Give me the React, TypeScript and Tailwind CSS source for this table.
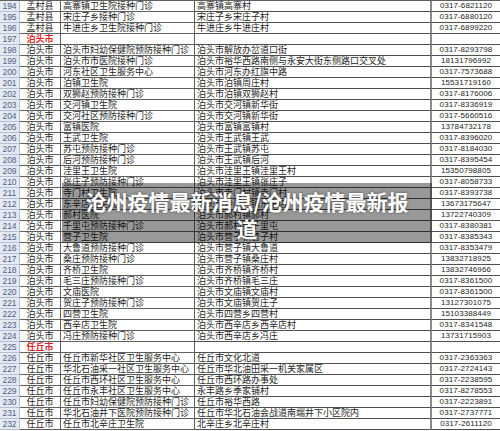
const rows: [number, string, string, string, string, boolean?][] = [
  [194, '孟村县', '高寨镇卫生院接种门诊', '高寨镇高寨村', '0317-6821120'],
  [195, '孟村县', '宋庄子乡接种门诊', '宋庄子乡宋庄子村', '0317-6880120'],
  [196, '孟村县', '牛进庄乡卫生院接种门诊', '牛进庄乡牛进庄村', '0317-6899220'],
  [197, '泊头市', '', '', '', true],
  [198, '泊头市', '泊头市妇幼保健院预防接种门诊', '泊头市解放办岔道口街', '0317-8293798'],
  [199, '泊头市', '泊头市市医院接种门诊', '泊头市裕华西路南侧与永安大街东侧路口交叉处', '18131796992'],
  [200, '泊头市', '河东社区卫生服务中心', '泊头市河东办红旗中路', '0317-7573688'],
  [201, '泊头市', '泊镇卫生院', '泊头市泊镇周庄村', '15531719160'],
  [202, '泊头市', '双狮赵预防接种门诊', '泊头市泊镇双狮赵村', '0317-8176006'],
  [203, '泊头市', '交河镇卫生院', '泊头市交河镇新华街', '0317-8336919'],
  [204, '泊头市', '交河社区预防接种门诊', '泊头市交河镇新华街', '0317-5660516'],
  [205, '泊头市', '富镇医院', '泊头市富镇富镇村', '13784732178'],
  [206, '泊头市', '王武卫生院', '泊头市王武镇王武', '0317-8396020'],
  [207, '泊头市', '苏屯预防接种门诊', '泊头市王武镇苏屯', '0317-8184030'],
  [208, '泊头市', '后河预防接种门诊', '泊头市王武镇后河', '0317-8395454'],
  [209, '泊头市', '洼里王卫生院', '泊头市洼里王镇洼里王村', '15350798805'],
  [210, '泊头市', '张庄子预防接种门诊', '泊头市洼里王镇张庄子', '0317-8058733'],
  [211, '泊头市', '寺门村卫生院', '泊头市寺门村镇寺门村', '0317-8393738'],
  [212, '泊头市', '东辛店卫生院', '泊头市寺门村镇东辛店', '13673175647'],
  [213, '泊头市', '郝村医院', '泊头市郝村镇郝村', '13722740309'],
  [214, '泊头市', '千里屯预防接种门诊', '泊头市郝村镇千里屯', '0317-8380381'],
  [215, '泊头市', '营子卫生院', '泊头市营子镇营子村', '0317-8385343'],
  [216, '泊头市', '大鲁道预防接种门诊', '泊头市营子镇大鲁道', '0317-8353479'],
  [217, '泊头市', '桑庄预防接种门诊', '泊头市营子镇桑庄村', '13832718925'],
  [218, '泊头市', '齐桥卫生院', '泊头市齐桥镇齐桥村', '13832746966'],
  [219, '泊头市', '毛三庄预防接种门诊', '泊头市齐桥镇毛三庄', '0317-8361500'],
  [220, '泊头市', '文庙医院', '泊头市文庙镇文庙村', '0317-8361500'],
  [221, '泊头市', '贺庄子预防接种门诊', '泊头市文庙镇贺庄子', '13127301075'],
  [222, '泊头市', '四营卫生院', '泊头市四营乡四营村', '15103388449'],
  [223, '泊头市', '西辛店卫生院', '泊头市西辛店乡西辛店村', '0317-8341548'],
  [224, '泊头市', '冯庄预防接种门诊', '泊头市西辛店乡冯庄', '13731715903'],
  [225, '任丘市', '', '', '', true],
  [226, '任丘市', '任丘市新华社区卫生服务中心', '任丘市文化北道', '0317-2363363'],
  [227, '任丘市', '华北石油采一社区卫生服务中心', '任丘市华北油田采一机关家属区', '0317-2724143'],
  [228, '任丘市', '任丘市西环社区卫生服务中心', '任丘市西环路办事处', '0317-2238595'],
  [229, '任丘市', '任丘市永丰社区卫生服务中心', '永丰路乡季家铺村', '0317-8278553'],
  [230, '任丘市', '任丘市妇幼保健院预防接种门诊', '任丘市裕华西路', '0317-2223891'],
  [231, '任丘市', '华北石油井下医院预防接种门诊', '任丘市华北石油会战道南端井下小区院内', '0317-2737771'],
  [232, '任丘市', '任丘市北辛庄卫生院', '北辛庄乡北辛庄村', '0317-2611120'],
];

const cjk = "font-['Noto_Sans_CJK_SC',sans-serif]";

export default function App() {
  return (
    <div className="relative w-[500px] h-[431px] overflow-hidden bg-white">
      {/* sheet */}
      <div className="border-t border-[#606060]">
        {rows.map(([n, county, name, addr, phone, head]) => (
          <div
            key={n}
            className="grid grid-cols-[20px_41px_134px_237px_68px] h-[11px] text-[9px] leading-[10px] text-[#1e1e1e]"
          >
            <div className="bg-[#e3eaf4] border-r border-b border-[#b4c0d2] text-[#52617f] text-center font-['Liberation_Sans',sans-serif] text-[8.5px]">
              {n}
            </div>
            <div
              className={`border-r border-b border-[#606060] text-center ${cjk} ${
                head ? 'text-[#e0242a] font-bold' : ''
              }`}
            >
              {county}
            </div>
            <div className={`border-r border-b border-[#606060] pl-[2px] whitespace-nowrap ${cjk}`}>
              {name}
            </div>
            <div className={`border-r-2 border-b border-r-[#8a8a8a] border-b-[#505050] pl-[2px] whitespace-nowrap ${cjk}`}>
              {addr}
            </div>
            <div className="border-b border-[#505050] text-center font-['Liberation_Sans',sans-serif] text-[8px] tracking-[0.1px]">
              {phone}
            </div>
          </div>
        ))}
      </div>

      {/* title overlay */}
      <div className="absolute left-[62px] top-[183px] w-[370px] h-[60px] bg-black/40 pt-[5px] text-center">
        <p className={`text-white font-bold text-[21px] leading-[27px] ${cjk} [text-shadow:0_0_3px_rgba(0,0,0,0.55)]`}>
          沧州疫情最新消息/沧州疫情最新报
          <br />道
        </p>
      </div>
    </div>
  );
}
